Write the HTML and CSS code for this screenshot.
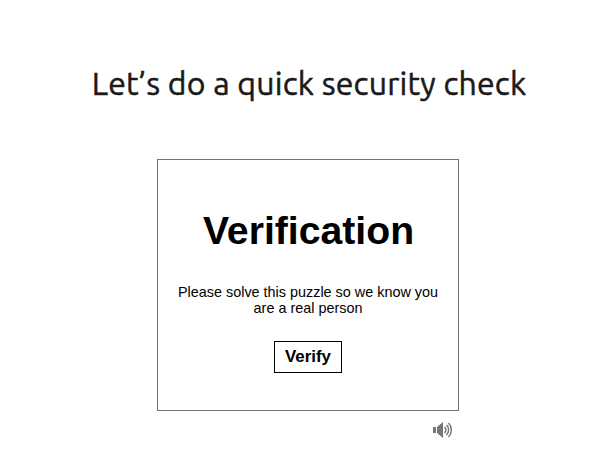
FILE: index.html
```html
<!DOCTYPE html>
<html lang="en">
<head>
<meta charset="utf-8">
<title>Security check</title>
<link rel="stylesheet" href="styles.css">
</head>
<body>
<main class="page">
  <h1 class="page-title"><span class="page-title-text">Let’s do a quick security check</span></h1>
  <section class="card">
    <h2 class="card-title">Verification</h2>
    <p class="card-text">Please solve this puzzle so we know you are a real person</p>
    <button class="verify" type="button">Verify</button>
  </section>
  <div class="tools">
    <svg class="audio" viewBox="0 0 20 18" role="img" aria-label="Audio">
      <path class="solid" d="M0 6h3v6H0zM4 6l6-5v16l-6-5z"/>
      <path class="wave" d="M11.5 6a4 4 0 0 1 0 6M13.5 4a7 7 0 0 1 0 10M15.5 2a10 10 0 0 1 0 14"/>
    </svg>
  </div>
</main>
</body>
</html>
```
FILE: styles.css
```css
body {
  margin: 0;
  background: #fff;
  color: #000;
  font-family: "Liberation Sans", Arial, sans-serif;
}
.page {
  width: 302px;
  margin-left: 157px;
  padding-top: 63px;
}
.page-title {
  display: flex;
  justify-content: center;
  height: 96px;
  margin: 0 -1px 0 1px;
  font: 400 32px/40px Ubuntu, "Noto Sans", sans-serif;
  letter-spacing: 0.2px;
  -webkit-text-stroke: 0.5px #1a1a1a;
  color: #1a1a1a;
  white-space: nowrap;
}
.card {
  box-sizing: border-box;
  height: 252px;
  padding: 48px 17px 0;
  border: 1px solid #767676;
  text-align: center;
}
.card-title {
  margin: 0 -1px 0 0;
  font-size: 39.2px;
  line-height: 46px;
}
.card-text {
  margin: 30px 0 25px;
  font-size: 14.4px;
  line-height: 16px;
}
.verify {
  width: 68px;
  height: 32px;
  padding: 0;
  border: 1px solid #000;
  background: #fff;
  color: #000;
  font: bold 16.9px/30px "Liberation Sans", Arial, sans-serif;
}
.tools {
  display: flex;
  justify-content: flex-end;
  padding: 10px 6px 0 0;
}
.audio {
  width: 20px;
  height: 18px;
}
.solid {
  fill: #767676;
}
.wave {
  fill: none;
  stroke: #767680;
  stroke-width: 1.5;
}
```
